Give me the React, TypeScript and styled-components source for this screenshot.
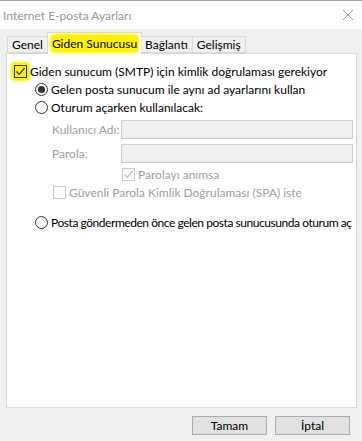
import React from 'react';
import styled, { createGlobalStyle } from 'styled-components';

const Global = createGlobalStyle`
  html, body {
    margin: 0;
    padding: 0;
    background: #f0f0f0;
  }
  body {
    font-family: Lato, "Segoe UI", sans-serif;
    font-size: 12px;
    color: #000;
  }
`;

const Window = styled.div`
  width: 362px;
  height: 441px;
  box-sizing: border-box;
  border-top: 1px solid #a8a8a8;
  background: #f0f0f0;
  display: flex;
  flex-direction: column;
  overflow: hidden;
`;

const TitleBar = styled.div`
  height: 28px;
  display: flex;
  align-items: center;
  justify-content: space-between;
  padding: 0 6px 0 3px;
  background: #ffffff;
`;

const Title = styled.span`
  font-size: 12px;
  color: #999999;
`;

const Close = styled.svg`
  width: 12px;
  height: 12px;
  margin-right: 2px;
`;

const Body = styled.div`
  flex: 1;
  display: flex;
  flex-direction: column;
  padding: 3px 5px 0 6px;
`;

const Tabs = styled.div`
  display: flex;
  align-items: flex-end;
  height: 21px;
  padding-left: 1px;
  position: relative;
  z-index: 1;
`;

const Tab = styled.div<{ $active?: boolean }>`
  padding: 0 ${p => (p.$active ? 3 : 4)}px;
  margin: 0 ${p => (p.$active ? -1 : 0)}px;
  box-sizing: border-box;
  display: flex;
  align-items: center;
  border: 1px solid #d9d9d9;
  border-bottom: ${p => (p.$active ? 'none' : '1px solid #d9d9d9')};
  border-left: ${p => (p.$active ? '1px solid #d9d9d9' : 'none')};
  background: ${p => (p.$active ? '#ffffff' : '#f0f0f0')};
  height: ${p => (p.$active ? 22 : 17)}px;
  margin-bottom: ${p => (p.$active ? -1 : 0)}px;
  &:first-child {
    border-left: 1px solid #d9d9d9;
  }
`;

const Highlight = styled.span`
  background: #fff200;
  border-radius: 4px;
  box-shadow: 0 0 3px 1px #fff200;
  padding: 1px 1px;
`;

const Panel = styled.div`
  height: 355px;
  box-sizing: border-box;
  background: #ffffff;
  border: 1px solid #d9d9d9;
  padding: 8px 0 0 6px;
  display: flex;
  flex-direction: column;
  overflow: hidden;
`;

const Row = styled.div<{ $indent?: number; $gap?: number }>`
  display: flex;
  align-items: center;
  height: 18px;
  margin-left: ${p => p.$indent ?? 0}px;
  margin-top: ${p => p.$gap ?? 0}px;
  white-space: nowrap;
`;

const Label = styled.span<{ $disabled?: boolean; $tight?: boolean }>`
  white-space: nowrap;
  letter-spacing: ${p => (p.$tight ? '-0.45px' : 'normal')};
  color: ${p => (p.$disabled ? '#a0a0a0' : '#000')};
`;

const BoxMark = styled.span<{ $hl?: boolean }>`
  display: inline-flex;
  padding: ${p => (p.$hl ? '2px' : '0')};
  margin: ${p => (p.$hl ? '-2px 1px -2px -1px' : '0 3px 0 0')};
  background: ${p => (p.$hl ? '#fff200' : 'transparent')};
  border-radius: 3px;
  box-shadow: ${p => (p.$hl ? '0 0 2px 1px #fff200' : 'none')};
`;

const Box = styled.span<{ $disabled?: boolean }>`
  width: 13px;
  height: 13px;
  box-sizing: border-box;
  border: 1px solid ${p => (p.$disabled ? '#cccccc' : '#333333')};
  background: transparent;
  display: inline-flex;
  align-items: center;
  justify-content: center;
`;

const Radio = styled.span<{ $checked?: boolean }>`
  width: 13px;
  height: 13px;
  box-sizing: border-box;
  border-radius: 50%;
  border: 1px solid #333333;
  margin-right: 3px;
  display: inline-flex;
  align-items: center;
  justify-content: center;
  &::after {
    content: '';
    width: 7px;
    height: 7px;
    border-radius: 50%;
    background: ${p => (p.$checked ? '#333333' : 'transparent')};
  }
`;

const FieldRow = styled.div<{ $gap?: number }>`
  display: grid;
  grid-template-columns: 69px 232px;
  align-items: center;
  margin-left: 39px;
  margin-top: ${p => p.$gap ?? 0}px;
  height: 19px;
`;

const Input = styled.div`
  height: 19px;
  box-sizing: border-box;
  background: #f0f0f0;
  border: 1px solid #cccccc;
`;

const Footer = styled.div`
  display: flex;
  justify-content: flex-end;
  gap: 8px;
  padding: 8px 7px 0 0;
`;

const Button = styled.button`
  width: 75px;
  height: 19px;
  box-sizing: border-box;
  background: #e1e1e1;
  border: 1px solid #adadad;
  font-family: Lato, "Segoe UI", sans-serif;
  font-size: 12px;
  color: #000;
  padding: 0;
`;

const Tick = ({ color }: { color: string }) => (
  <svg width="11" height="11" viewBox="0 0 11 11">
    <path d="M1.5 5.5 L4.2 8.3 L9.6 2" fill="none" stroke={color} strokeWidth="1.3" />
  </svg>
);

export default function App() {
  return (
    <>
      <Global />
      <Window>
        <TitleBar>
          <Title>Internet E-posta Ayarları</Title>
          <Close viewBox="0 0 12 12">
            <path d="M1 1 L11 11 M11 1 L1 11" stroke="#999" strokeWidth="1" />
          </Close>
        </TitleBar>
        <Body>
          <Tabs>
            <Tab>Genel</Tab>
            <Tab $active>
              <Highlight>Giden Sunucusu</Highlight>
            </Tab>
            <Tab>Bağlantı</Tab>
            <Tab>Gelişmiş</Tab>
          </Tabs>
          <Panel>
            <Row>
              <BoxMark $hl>
                <Box>
                  <Tick color="#333" />
                </Box>
              </BoxMark>
              <Label>Giden sunucum (SMTP) için kimlik doğrulaması gerekiyor</Label>
            </Row>
            <Row $indent={22}>
              <Radio $checked />
              <Label>Gelen posta sunucum ile aynı ad ayarlarını kullan</Label>
            </Row>
            <Row $indent={22}>
              <Radio />
              <Label>Oturum açarken kullanılacak:</Label>
            </Row>
            <FieldRow $gap={4}>
              <Label $disabled>Kullanıcı Adı:</Label>
              <Input />
            </FieldRow>
            <FieldRow $gap={5}>
              <Label $disabled>Parola:</Label>
              <Input />
            </FieldRow>
            <Row $indent={109} $gap={2}>
              <BoxMark>
                <Box $disabled>
                  <Tick color="#bbbbbb" />
                </Box>
              </BoxMark>
              <Label $disabled>Parolayı anımsa</Label>
            </Row>
            <Row $indent={40}>
              <BoxMark>
                <Box $disabled />
              </BoxMark>
              <Label $disabled>Güvenli Parola Kimlik Doğrulaması (SPA) iste</Label>
            </Row>
            <Row $indent={22} $gap={12}>
              <Radio />
              <Label $tight>Posta göndermeden önce gelen posta sunucusunda oturum aç</Label>
            </Row>
          </Panel>
          <Footer>
            <Button>Tamam</Button>
            <Button>İptal</Button>
          </Footer>
        </Body>
      </Window>
    </>
  );
}
